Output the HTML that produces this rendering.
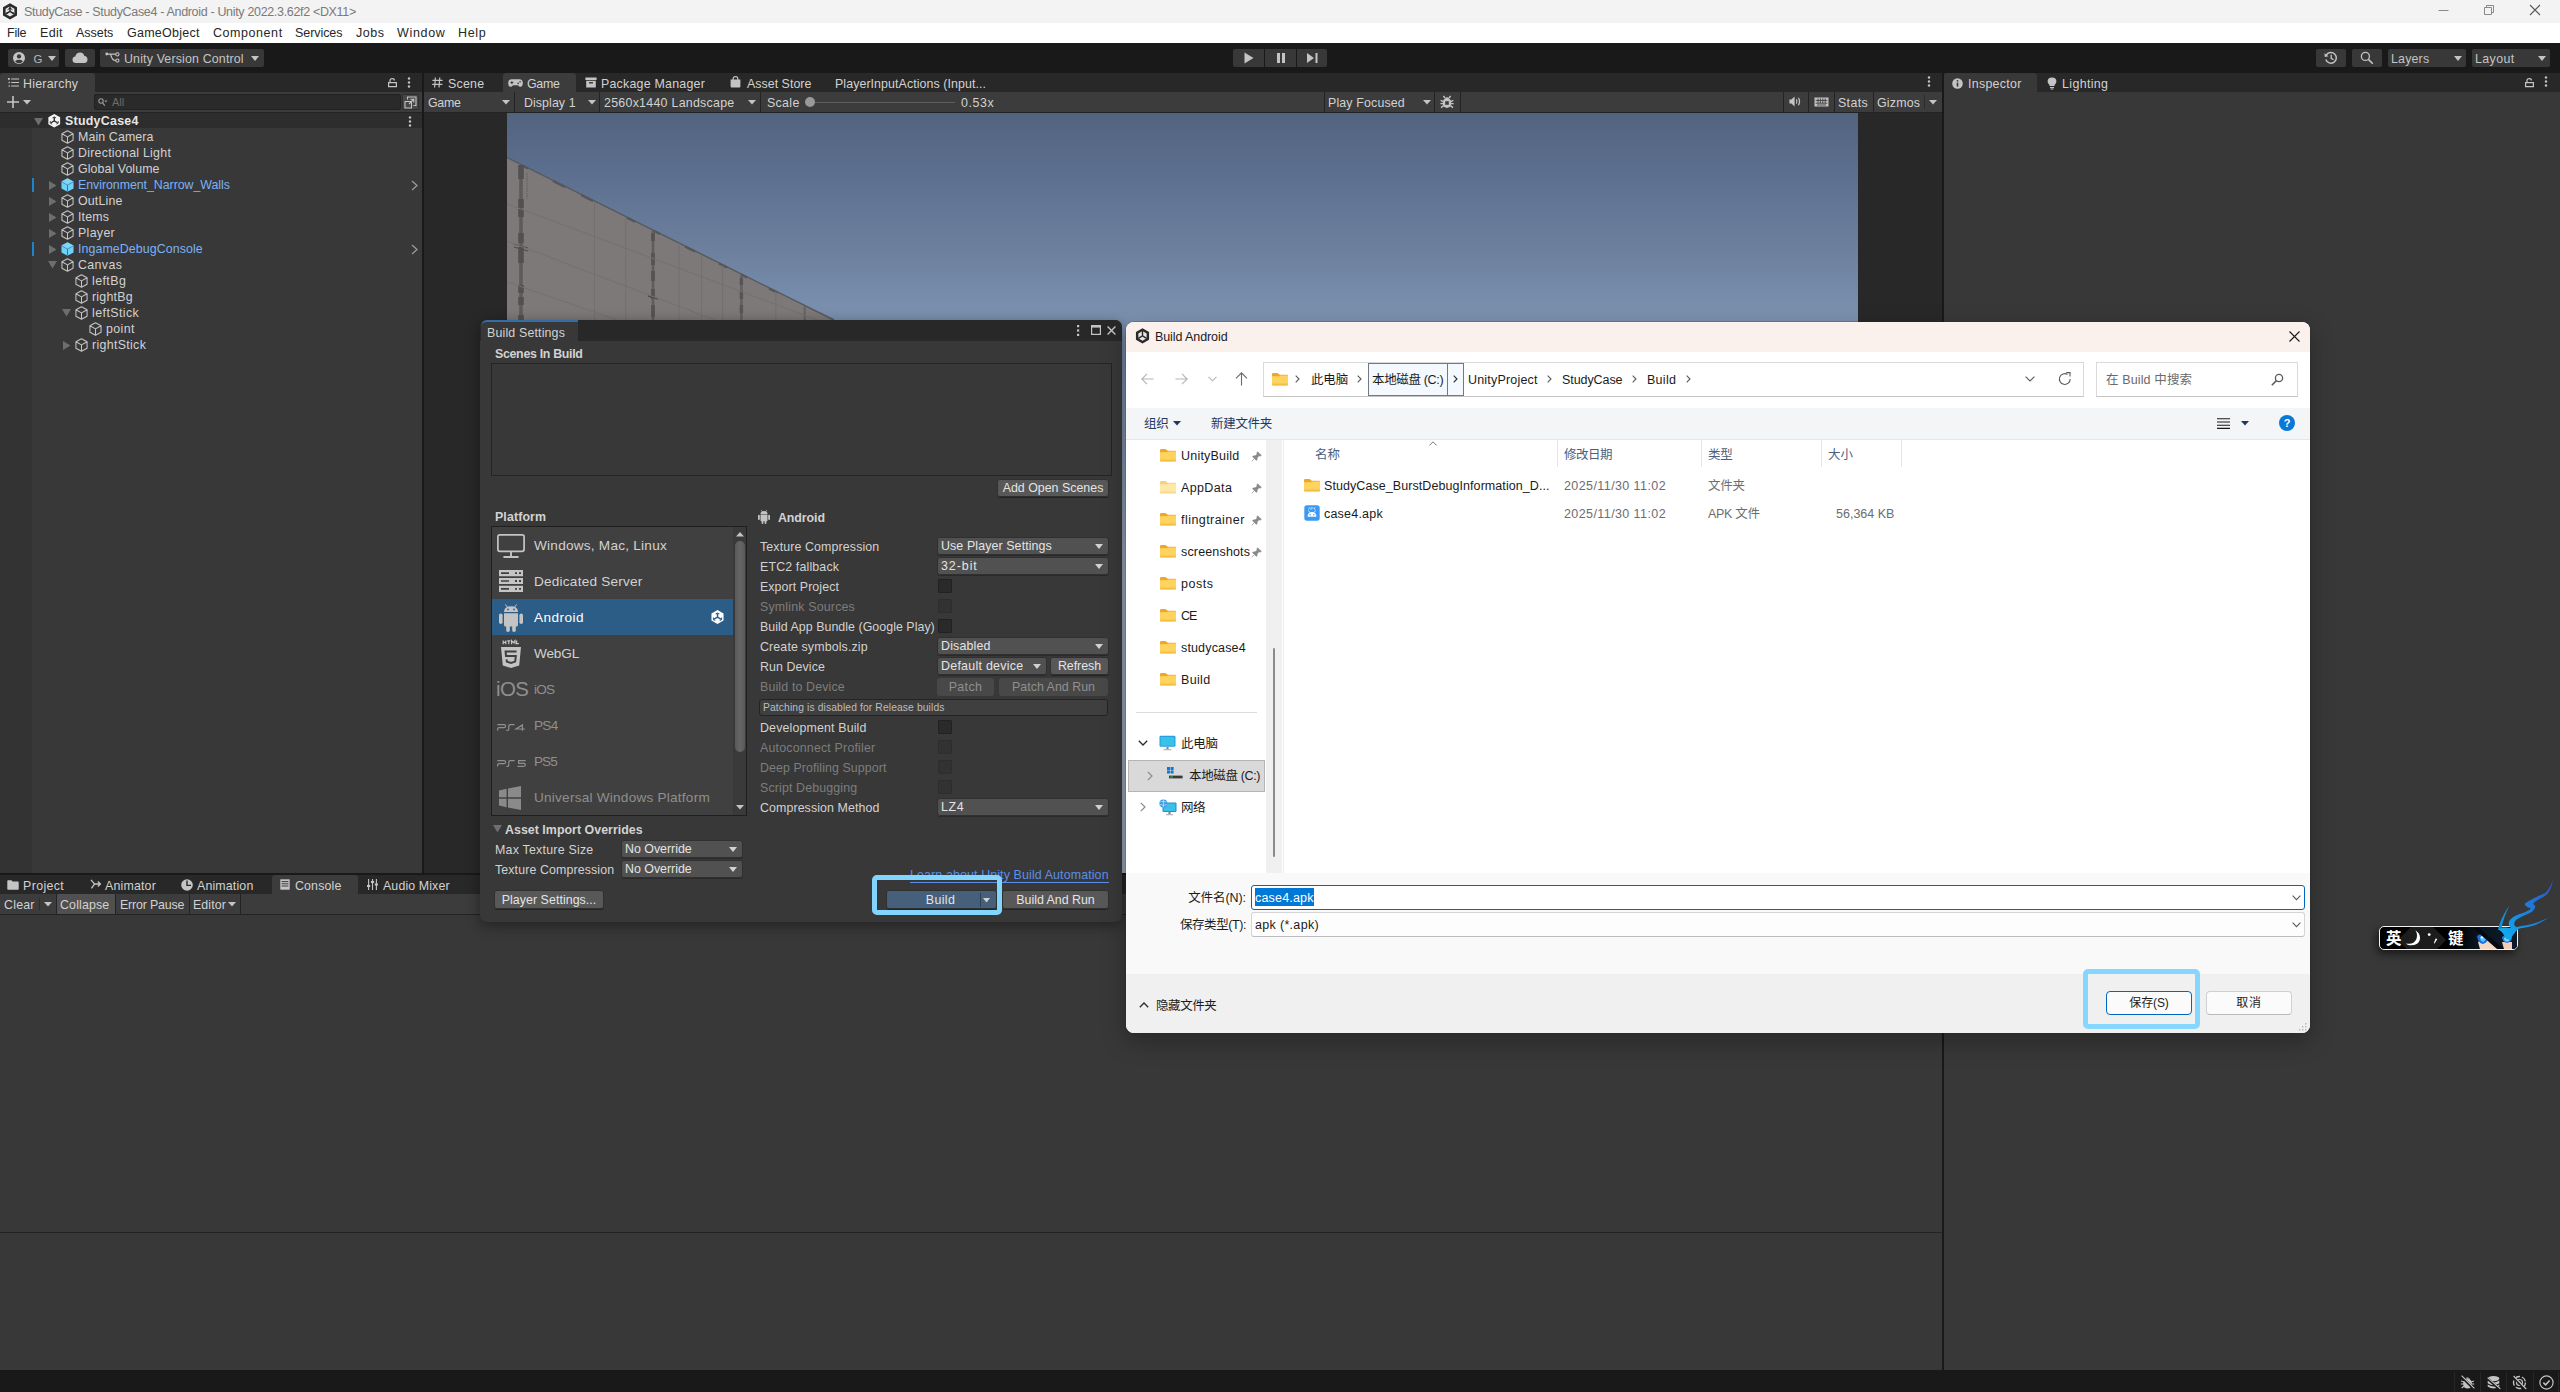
<!DOCTYPE html>
<html lang="zh-CN"><head><meta charset="utf-8"><title>StudyCase - Unity</title>
<style>
*{box-sizing:border-box;margin:0;padding:0}
html,body{width:2560px;height:1392px;overflow:hidden;background:#383838}
body{font-family:"Liberation Sans","Noto Sans CJK SC",sans-serif;font-size:12px;color:#d2d2d2}
#root{position:relative;width:2560px;height:1392px;overflow:hidden}
.a{position:absolute}
.t{position:absolute;white-space:nowrap;height:18px;line-height:18px;font-size:12.4px;color:#d2d2d2}
.b{font-weight:bold}
.dim{color:#7d7d7d}
.w{position:absolute;white-space:nowrap;height:20px;line-height:20px;font-size:12.5px;color:#1b1b1b;font-family:"Liberation Sans","Noto Sans CJK SC",sans-serif}
.g{color:#6d6d6d}
svg{position:absolute;overflow:visible}
.btn{position:absolute;background:#585858;border-radius:3px;box-shadow:0 1px 0 #242424, 0 0 0 1px #303030 inset;text-align:center;white-space:nowrap;font-size:12.4px;color:#e4e4e4;height:18px;line-height:18px}
.dd{position:absolute;background:#515151;border-radius:3px;box-shadow:0 0 0 1px #303030 inset,0 1px 0 #2a2a2a;white-space:nowrap;font-size:12.4px;color:#e4e4e4;height:18px;line-height:18px;padding-left:4px}
.dd:after{content:"";position:absolute;right:6px;top:7px;border:4px solid transparent;border-top:5px solid #d2d2d2;border-bottom:0}
.cb{position:absolute;width:14px;height:14px;background:#2a2a2a;border-radius:2px;box-shadow:0 0 0 1px #212121 inset}
.cb.off{background:#323232;box-shadow:0 0 0 1px #2d2d2d inset}
.sep{position:absolute;width:1px;background:#232323}
.tbb{position:absolute;top:49px;height:18px;background:#383838;border-radius:2px}
.m{color:#262626}

</style></head>
<body>
<svg width="0" height="0" style="position:absolute;left:-10px;top:-10px">
<defs>
<symbol id="cube" viewBox="0 0 14 15" overflow="visible">
  <path d="M7 .8 L13 4 L13 11 L7 14.2 L1 11 L1 4 Z M1 4 L7 7.4 L13 4 M7 7.4 L7 14.2" fill="none" stroke="#c4c4c4" stroke-width="1.15" stroke-linejoin="round"></path>
</symbol>
<symbol id="pcube" viewBox="0 0 14 15" overflow="visible">
  <path d="M7 .3 L13.5 3.8 L13.5 11.2 L7 14.7 L.5 11.2 L.5 3.8 Z" fill="#6fd2f8"></path>
  <path d="M.5 3.8 L7 7.4 L13.5 3.8 M7 7.4 L7 14.7" fill="none" stroke="#2f6f8f" stroke-width="1"></path>
  <path d="M7 .3 L13.5 3.8 L7 7.4 L.5 3.8 Z" fill="#86dbfb" opacity=".6"></path>
</symbol>
<symbol id="ulogo" viewBox="0 0 14 15" overflow="visible">
  <path d="M7 0 L13.6 3.7 L13.6 11.3 L7 15 L.4 11.3 L.4 3.7 Z" fill="currentColor"></path>
  <path d="M7 3.4 L7 7.6 L3.4 9.7 M7 7.6 L10.6 9.7" stroke="#2d2d2d" stroke-width="1.5" fill="none"></path>
  <path d="M5 4.4 L7 3.2 L9 4.4 M2.6 8 L2.6 10.2 L4.6 11.3 M11.4 8 L11.4 10.2 L9.4 11.3" stroke="#2d2d2d" stroke-width="1" fill="none"></path>
</symbol>
<symbol id="fold" viewBox="0 0 18 16" overflow="visible">
  <path d="M1 3.2 Q1 2 2.2 2 L6.2 2 Q6.9 2 7.4 2.5 L8.6 3.7 L15.8 3.7 Q17 3.7 17 4.9 L17 6 L1 6 Z" fill="#e9a92e"></path>
  <path d="M1 5.2 L8 5.2 Q8.6 5.2 9.1 4.8 L9.6 4.4 L15.8 4.4 Q17 4.4 17 5.6 L17 13.3 Q17 14.5 15.8 14.5 L2.2 14.5 Q1 14.5 1 13.3 Z" fill="#ffd45e"></path>
  <path d="M1 12.5 L17 12.5 L17 13.3 Q17 14.5 15.8 14.5 L2.2 14.5 Q1 14.5 1 13.3 Z" fill="#f5bf42"></path>
</symbol>
<symbol id="pin" viewBox="0 0 12 12" overflow="visible">
  <path d="M7.2 .8 L11.2 4.8 L10.2 5.4 L8.6 5.2 L6.6 7.6 L6.6 9.6 L5.8 10.2 L1.8 6.2 L2.4 5.4 L4.4 5.4 L6.8 3.4 L6.6 1.8 Z M3.6 8.4 L.8 11.2" fill="#8a8a8a" stroke="#8a8a8a" stroke-width=".8"></path>
</symbol>
</defs>
</svg>

<div id="root">

<!-- 00_base.html -->
<!-- window title bar -->
<div class="a" style="left:0;top:0;width:2560px;height:23px;background:#f3f3f3"></div>
<div class="w" style="left: 24px; top: 2px; color: rgb(122, 122, 122); letter-spacing: -0.33px;">StudyCase - StudyCase4 - Android - Unity 2022.3.62f2 &lt;DX11&gt;</div>
<!-- menu bar -->
<div class="a" style="left:0;top:23px;width:2560px;height:20px;background:#ffffff"></div>
<div class="w m" style="left: 7px; top: 23px; letter-spacing: -0.22px;">File</div>
<div class="w m" style="left: 40px; top: 23px; letter-spacing: 0.32px;">Edit</div>
<div class="w m" style="left: 76px; top: 23px; letter-spacing: -0.04px;">Assets</div>
<div class="w m" style="left: 127px; top: 23px; letter-spacing: 0.26px;">GameObject</div>
<div class="w m" style="left: 213px; top: 23px; letter-spacing: 0.56px;">Component</div>
<div class="w m" style="left: 295px; top: 23px; letter-spacing: -0.06px;">Services</div>
<div class="w m" style="left: 356px; top: 23px; letter-spacing: 0.5px;">Jobs</div>
<div class="w m" style="left: 397px; top: 23px; letter-spacing: 0.67px;">Window</div>
<div class="w m" style="left: 458px; top: 23px; letter-spacing: 0.63px;">Help</div>
<!-- main toolbar -->
<div class="a" style="left:0;top:43px;width:2560px;height:30px;background:#191919"></div>
<!-- dock background / splitters -->
<div class="a" style="left:0;top:73px;width:2560px;height:1297px;background:#191919"></div>
<!-- hierarchy panel -->
<div class="a" id="hier" style="left:0;top:73px;width:422px;height:800px;background:#383838"></div>
<!-- game panel -->
<div class="a" id="game" style="left:424px;top:73px;width:1518px;height:800px;background:#282828"></div>
<!-- inspector panel -->
<div class="a" id="insp" style="left:1944px;top:73px;width:616px;height:1297px;background:#383838"></div>
<!-- console panel -->
<div class="a" id="cons" style="left:0;top:875px;width:1942px;height:495px;background:#383838"></div>
<!-- status bar -->
<div class="a" style="left:0;top:1370px;width:2560px;height:22px;background:#191919"></div>

<!-- 10_toolbar.html -->
<!-- unity app icon -->
<svg style="left:2px;top:3px" width="16" height="17" viewBox="0 0 16 17"><path d="M8 .3 L15 4.3 L15 12.5 L8 16.6 L1 12.5 L1 4.3 Z" fill="#2b2b2b"></path><path d="M8 3.2 L12.4 5.8 L12.4 11 L8 13.6 L3.6 11 L3.6 5.8 Z" fill="#e8e8e8"></path><path d="M8 3.2 L8 8.4 L3.6 11 M8 8.4 L12.4 11" stroke="#2b2b2b" stroke-width="1.5" fill="none"></path><path d="M5.6 6.6 L8 5.2 L10.4 6.6 M5.2 9 L5.2 10.6 M10.8 9 L10.8 10.6" stroke="#2b2b2b" stroke-width="1" fill="none"></path></svg>
<!-- window controls -->
<svg style="left:2438px;top:4px" width="110" height="14" viewBox="0 0 110 14"><path d="M.5 6.5 H10.5" stroke="#8a8a8a" stroke-width="1" fill="none"></path><path d="M46.5 3.5 H53.5 V10.5 H46.5 Z M48.5 3.5 V1.5 H55.5 V8.5 H53.5" stroke="#8a8a8a" stroke-width="1" fill="none" stroke-linejoin="round"></path><path d="M92 1 L102 11 M102 1 L92 11" stroke="#5a5a5a" stroke-width="1.1" fill="none"></path></svg>

<!-- account button -->
<div class="tbb" style="left:8px;width:51px"></div>
<svg style="left:13px;top:52px" width="12" height="12" viewBox="0 0 12 12"><circle cx="6" cy="6" r="6" fill="#c4c4c4"></circle><circle cx="6" cy="4.4" r="2.1" fill="#383838"></circle><path d="M2 9.3 Q6 6.4 10 9.3 Q8.4 11.2 6 11.2 Q3.6 11.2 2 9.3Z" fill="#383838"></path></svg>
<div class="t" style="left:33.5px;top:50px;color:#b8b8b8;font-size:11.4px">G</div>
<svg style="left:48px;top:56px" width="8" height="5"><path d="M0 0 H8 L4 5 Z" fill="#c4c4c4"></path></svg>
<!-- cloud -->
<div class="tbb" style="left:65px;width:30px"></div>
<svg style="left:72px;top:52px" width="16" height="11" viewBox="0 0 16 11"><path d="M4 11 Q.5 11 .5 7.8 Q.5 5 3.3 4.6 Q4.2 .5 8.2 .5 Q11.6 .5 12.4 4 Q15.5 4.3 15.5 7.6 Q15.5 11 12.4 11 Z" fill="#c4c4c4"></path></svg>
<!-- UVC -->
<div class="tbb" style="left:100px;width:164px"></div>
<svg style="left:105px;top:52px" width="15" height="11" viewBox="0 0 15 11"><circle cx="1.8" cy="2" r="1.4" fill="#c4c4c4"></circle><circle cx="12.4" cy="2.4" r="1.6" fill="none" stroke="#c4c4c4" stroke-width="1.1"></circle><circle cx="12.4" cy="8.6" r="1.6" fill="none" stroke="#c4c4c4" stroke-width="1.1"></circle><path d="M3 2.2 H10.8 M5.6 2.4 Q7 8.6 10.8 8.6" stroke="#c4c4c4" stroke-width="1.2" fill="none"></path></svg>
<div class="t" style="left: 124px; top: 50px; color: rgb(196, 196, 196); letter-spacing: 0.16px;">Unity Version Control</div>
<svg style="left:251px;top:56px" width="8" height="5"><path d="M0 0 H8 L4 5 Z" fill="#c4c4c4"></path></svg>

<!-- play controls -->
<div class="tbb" style="left:1233px;width:31px;border-radius:2px 0 0 2px"></div>
<div class="tbb" style="left:1265px;width:31px;border-radius:0"></div>
<div class="tbb" style="left:1297px;width:30px;border-radius:0 2px 2px 0"></div>
<svg style="left:1244px;top:52px" width="10" height="12"><path d="M.5 .5 L9.5 6 L.5 11.5 Z" fill="#c4c4c4"></path></svg>
<svg style="left:1276px;top:53px" width="10" height="10"><path d="M1 0 H4 V10 H1 Z M6 0 H9 V10 H6 Z" fill="#c4c4c4"></path></svg>
<svg style="left:1307px;top:53px" width="11" height="10"><path d="M0 0 L7 5 L0 10 Z M8.5 0 H10.5 V10 H8.5 Z" fill="#c4c4c4"></path></svg>

<!-- right toolbar -->
<div class="tbb" style="left:2316px;width:30px"></div>
<svg style="left:2324px;top:51px" width="14" height="14" viewBox="0 0 14 14"><path d="M2.2 4.2 A5.4 5.4 0 1 1 1.8 8.6" fill="none" stroke="#c4c4c4" stroke-width="1.4"></path><path d="M.4 2.2 L.8 6 L4.6 5.2 Z" fill="#c4c4c4"></path><path d="M7.2 3.8 V7.4 L9.6 8.8" stroke="#c4c4c4" stroke-width="1.3" fill="none"></path></svg>
<div class="tbb" style="left:2352px;width:30px"></div>
<svg style="left:2360px;top:51px" width="14" height="14" viewBox="0 0 14 14"><circle cx="5.4" cy="5.4" r="4" fill="none" stroke="#c4c4c4" stroke-width="1.3"></circle><path d="M8.4 8.4 L12.8 12.8" stroke="#c4c4c4" stroke-width="1.6"></path></svg>
<div class="tbb" style="left:2388px;width:78px"></div>
<div class="t" style="left: 2391px; top: 50px; color: rgb(196, 196, 196); letter-spacing: 0.18px;">Layers</div>
<svg style="left:2454px;top:56px" width="8" height="5"><path d="M0 0 H8 L4 5 Z" fill="#c4c4c4"></path></svg>
<div class="tbb" style="left:2472px;width:78px"></div>
<div class="t" style="left: 2475px; top: 50px; color: rgb(196, 196, 196); letter-spacing: 0.4px;">Layout</div>
<svg style="left:2538px;top:56px" width="8" height="5"><path d="M0 0 H8 L4 5 Z" fill="#c4c4c4"></path></svg>

<!-- 20_hier.html -->
<div class="a" style="left:0;top:73px;width:422px;height:19px;background:#282828"></div>
<div class="a" style="left:0;top:73px;width:95px;height:19px;background:#3c3c3c;border-radius:3px 3px 0 0"></div>
<svg style="left:8px;top:78px" width="11" height="9" viewBox="0 0 11 9"><path d="M3.2 1 H11 M3.2 4.5 H11 M3.2 8 H11" stroke="#c4c4c4" stroke-width="1.1"></path><path d="M0 0 H1.8 V1.8 H0Z M.6 3.8 H1.8 V5.2 H.6Z M.6 7.3 H1.8 V8.7 H.6Z" fill="#c4c4c4"></path></svg>
<div class="t" style="left: 23px; top: 75px; letter-spacing: 0.25px;">Hierarchy</div>
<svg style="left:388px;top:78px" width="9" height="10" viewBox="0 0 9 10"><path d="M.6 4.6 H8.4 V8.6 H.6Z" fill="none" stroke="#c4c4c4" stroke-width="1.2"></path><path d="M2 4.6 V2.6 Q2 .7 4.2 .7 Q6.4 .7 6.4 2.4" fill="none" stroke="#c4c4c4" stroke-width="1.2"></path></svg>
<svg style="left:407px;top:77px" width="4" height="12"><circle cx="2" cy="1.5" r="1.2" fill="#c4c4c4"></circle><circle cx="2" cy="5.5" r="1.2" fill="#c4c4c4"></circle><circle cx="2" cy="9.5" r="1.2" fill="#c4c4c4"></circle></svg>
<div class="a" style="left:0;top:92px;width:422px;height:20px;background:#3c3c3c"></div>
<div class="a" style="left:0;top:112px;width:422px;height:1px;background:#232323"></div>
<svg style="left:7px;top:96px" width="12" height="12"><path d="M6 0 V12 M0 6 H12" stroke="#c4c4c4" stroke-width="1.6"></path></svg>
<svg style="left:23px;top:100px" width="8" height="5"><path d="M0 0 H8 L4 4.5 Z" fill="#c4c4c4"></path></svg>
<div class="a" style="left:94px;top:94px;width:307px;height:16px;background:#2a2a2a;border-radius:3px;box-shadow:0 0 0 1px #212121 inset"></div>
<svg style="left:98px;top:98px" width="10" height="9" viewBox="0 0 10 9"><circle cx="3" cy="3" r="2.2" fill="none" stroke="#9a9a9a" stroke-width="1.1"></circle><path d="M4.6 4.8 L6.8 7.6" stroke="#9a9a9a" stroke-width="1.2"></path><path d="M6.4 2.6 H9.4 L7.9 4.4Z" fill="#9a9a9a"></path></svg>
<div class="t" style="left:112px;top:93px;color:#6b6b6b;font-size:11px">All</div>
<div class="a" style="left:402px;top:94px;width:17px;height:16px;background:#474747;border-radius:2px;box-shadow:0 0 0 1px #2e2e2e inset"></div>
<svg style="left:404px;top:96px" width="13" height="13" viewBox="0 0 13 13"><path d="M3.5 3.5 V1 H12 V9.5 H9.5" fill="none" stroke="#c4c4c4" stroke-width="1.1"></path><path d="M1 5.5 H7.5 V12 H1Z" fill="none" stroke="#c4c4c4" stroke-width="1.1"></path><path d="M5 8 L9.6 3.4 M6.4 3.2 H9.8 V6.6" fill="none" stroke="#c4c4c4" stroke-width="1.1"></path></svg>
<div class="a" style="left:0;top:113px;width:422px;height:15px;background:#2d2d2d"></div>
<div class="a" style="left:0;top:128px;width:32px;height:745px;background:#333333"></div>
<svg style="left:34px;top:118px" width="9" height="8"><path d="M0 0 H9 L4.5 7.5 Z" fill="#6e6e6e"></path></svg>
<svg style="left:48px;top:114px;color:#f4f4f4" width="12.5" height="13.5"><use href="#ulogo"></use></svg>
<div class="t b" style="left: 65px; top: 112px; color: rgb(230, 230, 230); letter-spacing: 0.27px;">StudyCase4</div>
<svg style="left:408px;top:116px" width="4" height="12"><circle cx="2" cy="1.5" r="1.2" fill="#c4c4c4"></circle><circle cx="2" cy="5.5" r="1.2" fill="#c4c4c4"></circle><circle cx="2" cy="9.5" r="1.2" fill="#c4c4c4"></circle></svg>
<svg style="left:61px;top:130px" width="13" height="14"><use href="#cube"></use></svg>
<div class="t" style="left: 78px; top: 128px; letter-spacing: 0.11px;">Main Camera</div>
<svg style="left:61px;top:146px" width="13" height="14"><use href="#cube"></use></svg>
<div class="t" style="left: 78px; top: 144px; letter-spacing: 0.25px;">Directional Light</div>
<svg style="left:61px;top:162px" width="13" height="14"><use href="#cube"></use></svg>
<div class="t" style="left: 78px; top: 160px; letter-spacing: 0.07px;">Global Volume</div>
<div class="a" style="left:32px;top:178px;width:2px;height:14px;background:#1a86c9"></div>
<svg style="left:411px;top:180px" width="7" height="11"><path d="M1 1 L6 5.5 L1 10" fill="none" stroke="#9a9a9a" stroke-width="1.3"></path></svg>
<svg style="left:49px;top:181px" width="8" height="9"><path d="M0 0 L7.5 4.5 L0 9 Z" fill="#6e6e6e"></path></svg>
<svg style="left:61px;top:178px" width="13" height="14"><use href="#pcube"></use></svg>
<div class="t" style="left:78px;top:176px;letter-spacing:-0.05px;color:#7bb2f5">Environment_Narrow_Walls</div>
<svg style="left:49px;top:197px" width="8" height="9"><path d="M0 0 L7.5 4.5 L0 9 Z" fill="#6e6e6e"></path></svg>
<svg style="left:61px;top:194px" width="13" height="14"><use href="#cube"></use></svg>
<div class="t" style="left: 78px; top: 192px; letter-spacing: 0.17px;">OutLine</div>
<svg style="left:49px;top:213px" width="8" height="9"><path d="M0 0 L7.5 4.5 L0 9 Z" fill="#6e6e6e"></path></svg>
<svg style="left:61px;top:210px" width="13" height="14"><use href="#cube"></use></svg>
<div class="t" style="left: 78px; top: 208px; letter-spacing: 0.17px;">Items</div>
<svg style="left:49px;top:229px" width="8" height="9"><path d="M0 0 L7.5 4.5 L0 9 Z" fill="#6e6e6e"></path></svg>
<svg style="left:61px;top:226px" width="13" height="14"><use href="#cube"></use></svg>
<div class="t" style="left: 78px; top: 224px; letter-spacing: 0.32px;">Player</div>
<div class="a" style="left:32px;top:242px;width:2px;height:14px;background:#1a86c9"></div>
<svg style="left:411px;top:244px" width="7" height="11"><path d="M1 1 L6 5.5 L1 10" fill="none" stroke="#9a9a9a" stroke-width="1.3"></path></svg>
<svg style="left:49px;top:245px" width="8" height="9"><path d="M0 0 L7.5 4.5 L0 9 Z" fill="#6e6e6e"></path></svg>
<svg style="left:61px;top:242px" width="13" height="14"><use href="#pcube"></use></svg>
<div class="t" style="left: 78px; top: 240px; letter-spacing: 0.08px; color: rgb(123, 178, 245);">IngameDebugConsole</div>
<svg style="left:48px;top:261px" width="9" height="8"><path d="M0 0 H9 L4.5 7.5 Z" fill="#6e6e6e"></path></svg>
<svg style="left:61px;top:258px" width="13" height="14"><use href="#cube"></use></svg>
<div class="t" style="left: 78px; top: 256px; letter-spacing: 0.38px;">Canvas</div>
<svg style="left:75px;top:274px" width="13" height="14"><use href="#cube"></use></svg>
<div class="t" style="left: 92px; top: 272px; letter-spacing: 0.42px;">leftBg</div>
<svg style="left:75px;top:290px" width="13" height="14"><use href="#cube"></use></svg>
<div class="t" style="left: 92px; top: 288px; letter-spacing: 0.22px;">rightBg</div>
<svg style="left:62px;top:309px" width="9" height="8"><path d="M0 0 H9 L4.5 7.5 Z" fill="#6e6e6e"></path></svg>
<svg style="left:75px;top:306px" width="13" height="14"><use href="#cube"></use></svg>
<div class="t" style="left: 92px; top: 304px; letter-spacing: 0.43px;">leftStick</div>
<svg style="left:89px;top:322px" width="13" height="14"><use href="#cube"></use></svg>
<div class="t" style="left: 106px; top: 320px; letter-spacing: 0.38px;">point</div>
<svg style="left:63px;top:341px" width="8" height="9"><path d="M0 0 L7.5 4.5 L0 9 Z" fill="#6e6e6e"></path></svg>
<svg style="left:75px;top:338px" width="13" height="14"><use href="#cube"></use></svg>
<div class="t" style="left: 92px; top: 336px; letter-spacing: 0.32px;">rightStick</div>
<!-- 30_game.html -->
<!-- game tabs -->
<div class="a" style="left:503px;top:73px;width:73px;height:19px;background:#3c3c3c;border-radius:3px 3px 0 0"></div>
<svg style="left:432px;top:77px" width="11" height="11" viewBox="0 0 11 11"><path d="M3.4 .5 L2.6 10.5 M7.8 .5 L7 10.5 M.4 3.4 H10.6 M.2 7.4 H10.4" stroke="#c4c4c4" stroke-width="1.2" fill="none"></path></svg>
<div class="t" style="left: 448px; top: 75px; letter-spacing: 0.24px;">Scene</div>
<svg style="left:508px;top:79px" width="15" height="8" viewBox="0 0 15 8"><path d="M3.8 .3 H11.2 Q14.8 .3 14.8 4 Q14.8 7.7 12.4 7.7 Q11 7.7 10 6.2 H5 Q4 7.7 2.6 7.7 Q.2 7.7 .2 4 Q.2 .3 3.8 .3Z" fill="#c4c4c4"></path><path d="M2.4 3.6 H5.4 M3.9 2.1 V5.1" stroke="#3c3c3c" stroke-width="1"></path><circle cx="10.2" cy="4.4" r=".8" fill="#3c3c3c"></circle><circle cx="12.1" cy="2.8" r=".8" fill="#3c3c3c"></circle></svg>
<div class="t" style="left: 527px; top: 75px; letter-spacing: -0.32px;">Game</div>
<svg style="left:585px;top:77px" width="12" height="11" viewBox="0 0 12 11"><path d="M.4 .4 H11.6 V3 H.4Z M1.2 3.8 H10.8 V10.6 H1.2Z" fill="#c4c4c4"></path><path d="M4 5.8 H8" stroke="#282828" stroke-width="1.3"></path></svg>
<div class="t" style="left: 601px; top: 75px; letter-spacing: 0.23px;">Package Manager</div>
<svg style="left:730px;top:76px" width="11" height="12" viewBox="0 0 11 12"><path d="M.6 3.6 H10.4 L10.4 10.6 Q10.4 11.6 9.4 11.6 H1.6 Q.6 11.6 .6 10.6Z" fill="#c4c4c4"></path><path d="M3.2 4.4 V2.6 Q3.2 .6 5.5 .6 Q7.8 .6 7.8 2.6 V4.4" fill="none" stroke="#c4c4c4" stroke-width="1.2"></path></svg>
<div class="t" style="left: 747px; top: 75px; letter-spacing: 0.03px;">Asset Store</div>
<div class="t" style="left: 835px; top: 75px; letter-spacing: 0.08px;">PlayerInputActions (Input...</div>
<svg style="left:1927px;top:76px" width="4" height="12"><circle cx="2" cy="1.5" r="1.2" fill="#c4c4c4"></circle><circle cx="2" cy="5.5" r="1.2" fill="#c4c4c4"></circle><circle cx="2" cy="9.5" r="1.2" fill="#c4c4c4"></circle></svg>
<!-- game toolbar -->
<div class="a" style="left:424px;top:92px;width:1518px;height:21px;background:#3c3c3c;border-bottom:1px solid #232323"></div>
<div class="t" style="left: 428px; top: 94px; letter-spacing: -0.28px;">Game</div>
<svg style="left:502px;top:100px" width="8" height="5"><path d="M0 0 H8 L4 4.5 Z" fill="#c4c4c4"></path></svg>
<div class="sep" style="left:514px;top:92px;height:20px"></div>
<div class="t" style="left: 524px; top: 94px; letter-spacing: 0.07px;">Display 1</div>
<svg style="left:588px;top:100px" width="8" height="5"><path d="M0 0 H8 L4 4.5 Z" fill="#c4c4c4"></path></svg>
<div class="sep" style="left:599px;top:92px;height:20px"></div>
<div class="t" style="left: 604px; top: 94px; letter-spacing: 0.27px;">2560x1440 Landscape</div>
<svg style="left:748px;top:100px" width="8" height="5"><path d="M0 0 H8 L4 4.5 Z" fill="#c4c4c4"></path></svg>
<div class="sep" style="left:760px;top:92px;height:20px"></div>
<div class="t" style="left: 767px; top: 94px; letter-spacing: 0.32px;">Scale</div>
<div class="a" style="left:810px;top:102px;width:145px;height:1px;background:#5e5e5e"></div>
<div class="a" style="left:805px;top:97px;width:10px;height:10px;border-radius:5px;background:#999999"></div>
<div class="t" style="left: 961px; top: 94px; letter-spacing: 0.62px;">0.53x</div>
<div class="sep" style="left:1324px;top:92px;height:20px"></div>
<div class="t" style="left: 1328px; top: 94px; letter-spacing: 0.15px;">Play Focused</div>
<svg style="left:1423px;top:100px" width="8" height="5"><path d="M0 0 H8 L4 4.5 Z" fill="#c4c4c4"></path></svg>
<div class="sep" style="left:1434px;top:92px;height:20px"></div>
<svg style="left:1440px;top:95px" width="14" height="14" viewBox="0 0 14 14"><ellipse cx="7" cy="8" rx="4.3" ry="5" fill="#c4c4c4"></ellipse><path d="M4.6 3.4 Q7 1 9.4 3.4Z" fill="#c4c4c4"></path><path d="M3.4 1 L5 3 M10.6 1 L9 3 M.6 5.4 L3.4 6.6 M13.4 5.4 L10.6 6.6 M.4 8.6 H3.2 M13.6 8.6 H10.8 M1 12.6 L3.6 10.6 M13 12.6 L10.4 10.6" stroke="#c4c4c4" stroke-width="1.4" fill="none"></path><rect x="5.2" y="6.2" width="3.6" height="3.6" fill="#3c3c3c"></rect></svg>
<div class="sep" style="left:1460px;top:92px;height:20px"></div>
<div class="sep" style="left:1783px;top:92px;height:20px"></div>
<svg style="left:1789px;top:96px" width="13" height="11" viewBox="0 0 13 11"><path d="M.4 3.4 H2.4 L5.6 .6 V10.4 L2.4 7.6 H.4Z" fill="#c4c4c4"></path><path d="M7.4 3.4 Q8.6 5.5 7.4 7.6 M9.4 1.8 Q11.6 5.5 9.4 9.2" stroke="#c4c4c4" stroke-width="1.2" fill="none"></path></svg>
<div class="sep" style="left:1808px;top:92px;height:20px"></div>
<svg style="left:1814px;top:97px" width="15" height="10" viewBox="0 0 15 10"><path d="M.5 .5 H14.5 V9.5 H.5Z" fill="#c4c4c4"></path><path d="M1.6 3.4 H13.4 M1.6 6.2 H13.4 M4 1.4 V6.2 M6.4 1.4 V6.2 M8.8 1.4 V6.2 M11.2 1.4 V6.2 M3 8 H12" stroke="#3c3c3c" stroke-width=".9"></path></svg>
<div class="sep" style="left:1834px;top:92px;height:20px"></div>
<div class="t" style="left: 1838px; top: 94px; letter-spacing: 0.36px;">Stats</div>
<div class="sep" style="left:1873px;top:92px;height:20px"></div>
<div class="t" style="left: 1877px; top: 94px; letter-spacing: 0.18px;">Gizmos</div>
<div class="sep" style="left:1924px;top:95px;height:14px;background:#2c2c2c"></div>
<svg style="left:1929px;top:100px" width="8" height="5"><path d="M0 0 H8 L4 4.5 Z" fill="#c4c4c4"></path></svg>
<!-- game image -->
<div class="a" style="left:507px;top:113px;width:1351px;height:760px;background:linear-gradient(180deg,#52637f 0px,#5e7191 70px,#6d819f 140px,#7c92b0 207px,#8ea4bf 340px,#a9bccf 470px)"></div>
<svg style="left:507px;top:113px" width="1351" height="760" viewBox="0 0 1351 760">
  <path d="M0 44.5 L327 207 L600 342 L600 760 L0 760 Z" fill="#7d7978"></path>
  <path d="M0 44.5 L327 207" stroke="#585a62" stroke-width="1.5" fill="none"></path>
  <path d="M15 52.6 L21 55.6 M46 68 L58 74 M74 82 L86 88 M146 117.6 L153 121.1 M120 104.8 L128 108.8 M178 133.6 L188 138.6 M234 161.4 L240 164.4 M212 150.5 L220 154.5 M262 175.4 L270 179.4" stroke="#55555c" stroke-width="2.2" fill="none"></path>
  <path d="M14 52 V207" stroke="#5e5b5b" stroke-width="3.6"></path>
  <path d="M14 52 V66 M14 86 V95 M14 96 V104 M14 120 V130 M14 134 V150 M14 172 V180 M14 184 V192 M14 202 V207" stroke="#535051" stroke-width="5.6"></path>
  <path d="M7 131 L21 135 M7 134 L21 138" stroke="#4f4d4d" stroke-width="1.2"></path>
  <path d="M20 60 V86" stroke="#6a6666" stroke-width="1.4" stroke-dasharray="1.5 1"></path>
  <path d="M146 118 V207" stroke="#5f5c5c" stroke-width="2.6"></path>
  <path d="M146 120 V128 M146 140 V152 M146 158 V168 M146 176 V186 M146 192 V204" stroke="#565354" stroke-width="3.8"></path>
  <path d="M141 183 L151 186" stroke="#4f4d4d" stroke-width="1.6"></path>
  <path d="M234.4 162 V207" stroke="#605d5d" stroke-width="2.4"></path>
  <path d="M234.4 165 V172 M234.4 178 V186 M234.4 192 V200" stroke="#575455" stroke-width="3.4"></path>
  <path d="M297.7 193 V207" stroke="#666363" stroke-width="2"></path>
  <path d="M87.5 89 V207 M118.8 104 V207 M172 130 V207 M194.5 142 V207 M215.6 152 V207 M268.8 178 V207" stroke="#747070" stroke-width="1"></path>
  <path d="M0 90.8 L310 207 M0 128 L208 207 M0 168.8 L110 207" stroke="#747071" stroke-width="1"></path>
</svg>

<!-- 40_insp.html -->
<div class="a" style="left:1944px;top:73px;width:616px;height:19px;background:#282828"></div>
<div class="a" style="left:1944px;top:73px;width:93px;height:19px;background:#383838;border-radius:3px 3px 0 0"></div>
<svg style="left:1952px;top:78px" width="11" height="11" viewBox="0 0 11 11"><circle cx="5.5" cy="5.5" r="5.3" fill="#c4c4c4"></circle><path d="M5.5 4.6 V8.6" stroke="#383838" stroke-width="1.6"></path><circle cx="5.5" cy="2.8" r=".9" fill="#383838"></circle></svg>
<div class="t" style="left: 1968px; top: 75px; letter-spacing: 0.29px;">Inspector</div>
<svg style="left:2047px;top:77px" width="10" height="13" viewBox="0 0 10 13"><path d="M5 .4 Q9.4 .4 9.4 4.4 Q9.4 6.4 7.6 7.8 V9 H2.4 V7.8 Q.6 6.4 .6 4.4 Q.6 .4 5 .4Z M3 10 H7 V11.2 H3Z M3.8 11.8 H6.2 V12.6 H3.8Z" fill="#c4c4c4"></path></svg>
<div class="t" style="left: 2062px; top: 75px; letter-spacing: 0.37px;">Lighting</div>
<svg style="left:2525px;top:78px" width="9" height="10" viewBox="0 0 9 10"><path d="M.6 4.6 H8.4 V8.6 H.6Z" fill="none" stroke="#c4c4c4" stroke-width="1.2"></path><path d="M2 4.6 V2.6 Q2 .7 4.2 .7 Q6.4 .7 6.4 2.4" fill="none" stroke="#c4c4c4" stroke-width="1.2"></path></svg>
<svg style="left:2544px;top:76px" width="4" height="12"><circle cx="2" cy="1.5" r="1.2" fill="#c4c4c4"></circle><circle cx="2" cy="5.5" r="1.2" fill="#c4c4c4"></circle><circle cx="2" cy="9.5" r="1.2" fill="#c4c4c4"></circle></svg>

<!-- 50_cons.html -->
<div class="a" style="left:0;top:875px;width:1942px;height:19px;background:#282828"></div>
<div class="a" style="left:272px;top:875px;width:86px;height:19px;background:#3c3c3c;border-radius:3px 3px 0 0"></div>
<svg style="left:7px;top:880px" width="12" height="10" viewBox="0 0 12 10"><path d="M.3 1 Q.3 .2 1.1 .2 H4.4 L5.6 1.6 H10.9 Q11.7 1.6 11.7 2.4 V9 Q11.7 9.8 10.9 9.8 H1.1 Q.3 9.8 .3 9Z" fill="#c4c4c4"></path></svg>
<div class="t" style="left: 23px; top: 877px; letter-spacing: 0.37px;">Project</div>
<svg style="left:90px;top:879px" width="11" height="10" viewBox="0 0 11 10"><path d="M1 .8 L4.6 5 L1.4 9.4 M4.6 5 H10.4 M7.8 2.6 L10.4 5 L7.8 7.4" stroke="#c4c4c4" stroke-width="1.3" fill="none"></path></svg>
<div class="t" style="left: 105px; top: 877px; letter-spacing: 0.17px;">Animator</div>
<svg style="left:181px;top:879px" width="12" height="12" viewBox="0 0 12 12"><circle cx="6" cy="6" r="5.8" fill="#c4c4c4"></circle><path d="M6 1.6 V6.4 H10" stroke="#282828" stroke-width="1.4" fill="none"></path></svg>
<div class="t" style="left: 197px; top: 877px; letter-spacing: 0.15px;">Animation</div>
<svg style="left:280px;top:879px" width="10" height="11" viewBox="0 0 10 11"><path d="M.3 .3 H9.7 V10.7 H.3Z" fill="#c4c4c4"></path><path d="M1.6 2.6 H8.4 M1.6 4.8 H8.4 M1.6 7 H8.4" stroke="#3c3c3c" stroke-width="1"></path></svg>
<div class="t" style="left: 295px; top: 877px; letter-spacing: 0.14px;">Console</div>
<svg style="left:367px;top:879px" width="11" height="11" viewBox="0 0 11 11"><path d="M1.6 0 V11 M5.5 0 V11 M9.4 0 V11" stroke="#c4c4c4" stroke-width="1.1"></path><path d="M0 6 H3.2 V8 H0Z M3.9 2 H7.1 V4 H3.9Z M7.8 4.6 H11 V6.6 H7.8Z" fill="#c4c4c4"></path></svg>
<div class="t" style="left: 383px; top: 877px; letter-spacing: 0.11px;">Audio Mixer</div>
<!-- console toolbar -->
<div class="a" style="left:0;top:894px;width:1942px;height:21px;background:#3c3c3c;border-bottom:1px solid #232323"></div>
<div class="a" style="left:57px;top:894px;width:58px;height:20px;background:#505050"></div>
<div class="t" style="left: 4px; top: 896px; letter-spacing: 0.22px;">Clear</div>
<div class="sep" style="left:39px;top:898px;height:12px;background:#2c2c2c"></div>
<svg style="left:44px;top:902px" width="8" height="5"><path d="M0 0 H8 L4 4.5 Z" fill="#c4c4c4"></path></svg>
<div class="sep" style="left:56px;top:894px;height:20px"></div>
<div class="t" style="left: 60px; top: 896px; letter-spacing: 0.15px;">Collapse</div>
<div class="sep" style="left:115px;top:894px;height:20px"></div>
<div class="t" style="left: 120px; top: 896px; letter-spacing: -0.18px;">Error Pause</div>
<div class="sep" style="left:189px;top:894px;height:20px"></div>
<div class="t" style="left: 193px; top: 896px; letter-spacing: 0.08px;">Editor</div>
<svg style="left:228px;top:902px" width="8" height="5"><path d="M0 0 H8 L4 4.5 Z" fill="#c4c4c4"></path></svg>
<div class="sep" style="left:240px;top:894px;height:20px"></div>
<div class="a" style="left:0;top:1232px;width:1942px;height:1px;background:#232323"></div>

<!-- 60_status.html -->
<div class="sep" style="left:2454px;top:1372px;height:20px;background:#272727"></div>
<div class="sep" style="left:2480px;top:1372px;height:20px;background:#272727"></div>
<div class="sep" style="left:2506px;top:1372px;height:20px;background:#272727"></div>
<div class="sep" style="left:2533px;top:1372px;height:20px;background:#272727"></div>
<svg style="left:2460px;top:1375px" width="15" height="15" viewBox="0 0 15 15"><ellipse cx="7.5" cy="8.6" rx="4.4" ry="5" fill="#c4c4c4"></ellipse><path d="M5 3.6 Q7.5 1.2 10 3.6Z" fill="#c4c4c4"></path><path d="M1 6 L4 7 M14 6 L11 7 M.8 9 H3.8 M14.2 9 H11.2 M1.6 13 L4.2 11 M13.4 13 L10.8 11" stroke="#c4c4c4" stroke-width="1.1"></path><path d="M1 1 L14 14" stroke="#191919" stroke-width="2.6"></path><path d="M1.6 .6 L14.4 13.4" stroke="#c4c4c4" stroke-width="1.1"></path></svg>
<svg style="left:2486px;top:1375px" width="15" height="15" viewBox="0 0 15 15"><ellipse cx="7.5" cy="3.6" rx="5.8" ry="2.6" fill="#c4c4c4"></ellipse><path d="M1.7 5.4 Q7.5 9.4 13.3 5.4 V8.2 Q7.5 12.2 1.7 8.2Z M1.7 9.6 Q7.5 13.6 13.3 9.6 V11.6 Q7.5 15.6 1.7 11.6Z" fill="#c4c4c4"></path><path d="M1 3 L14 14.4" stroke="#191919" stroke-width="2.6"></path><path d="M1.6 2.6 L14.4 13.8" stroke="#c4c4c4" stroke-width="1.1"></path></svg>
<svg style="left:2512px;top:1375px" width="15" height="15" viewBox="0 0 15 15"><circle cx="7.5" cy="7.5" r="6" fill="none" stroke="#c4c4c4" stroke-width="1.3" stroke-dasharray="5.5 2"></circle><circle cx="7.5" cy="7.5" r="3" fill="none" stroke="#c4c4c4" stroke-width="1.2"></circle><circle cx="7.5" cy="7.5" r="1" fill="#c4c4c4"></circle><path d="M1 1.4 L13.6 14.4" stroke="#191919" stroke-width="2.6"></path><path d="M1.6 1 L14.2 14" stroke="#c4c4c4" stroke-width="1.1"></path></svg>
<svg style="left:2539px;top:1375px" width="15" height="15" viewBox="0 0 15 15"><circle cx="7.5" cy="7.5" r="6.6" fill="none" stroke="#c4c4c4" stroke-width="1.2"></circle><path d="M4.4 7.6 L6.6 9.8 L10.6 5.4" fill="none" stroke="#c4c4c4" stroke-width="1.5"></path></svg>

<div class="sep" style="left:2558px;top:1372px;height:20px;background:#272727"></div>
<!-- 70_build.html -->
<div class="a" style="left:480px;top:320px;width:642px;height:602px;background:#383838;border-radius:7px;box-shadow:0 3px 14px rgba(0,0,0,.42)"></div>
<div class="a" style="left:480px;top:320px;width:642px;height:21px;background:#282828;border-radius:7px 7px 0 0"></div>
<div class="a" style="left:481px;top:320px;width:97px;height:21px;background:#383838;border-radius:6px 0 0 0;border-top:2px solid #346ca6"></div>
<div class="t" style="left: 487px; top: 324px; letter-spacing: 0.16px;">Build Settings</div>
<svg style="left:1077px;top:325px" width="3" height="12"><rect x="0" y="0" width="2.2" height="2.2" fill="#c4c4c4"></rect><rect x="0" y="4.4" width="2.2" height="2.2" fill="#c4c4c4"></rect><rect x="0" y="8.8" width="2.2" height="2.2" fill="#c4c4c4"></rect></svg>
<svg style="left:1091px;top:325px" width="10" height="10"><path d="M.6 .6 H9.4 V9.4 H.6Z" fill="none" stroke="#c4c4c4" stroke-width="1.2"></path><path d="M.6 1.6 H9.4" stroke="#c4c4c4" stroke-width="2"></path></svg>
<svg style="left:1107px;top:326px" width="9" height="9"><path d="M.6 .6 L8.4 8.4 M8.4 .6 L.6 8.4" stroke="#c4c4c4" stroke-width="1.4"></path></svg>
<div class="t b" style="left: 495px; top: 345px; letter-spacing: -0.31px;">Scenes In Build</div>
<div class="a" style="left:491px;top:363px;width:621px;height:113px;background:#383838;border:1px solid #242424"></div>
<div class="btn" style="left: 997px; top: 479px; width: 112px; letter-spacing: 0.01px;">Add Open Scenes</div>
<div class="t b" style="left: 495px; top: 508px; letter-spacing: 0.11px;">Platform</div>
<div class="a" style="left:491px;top:526px;width:256px;height:290px;background:#404040;border:1px solid #1f1f1f"></div>
<div class="a" style="left:733px;top:527px;width:13px;height:288px;background:#3a3a3a;border-left:1px solid #383838"></div>
<div class="a" style="left:735px;top:541px;width:10px;height:211px;border-radius:5px;background:linear-gradient(90deg,#585858,#666 50%,#585858)"></div>
<svg style="left:736px;top:532px" width="8" height="5"><path d="M0 4.5 H8 L4 0 Z" fill="#c4c4c4"></path></svg>
<svg style="left:736px;top:805px" width="8" height="5"><path d="M0 0 H8 L4 4.5 Z" fill="#c4c4c4"></path></svg>
<div class="a" style="left:492px;top:599px;width:241px;height:36px;background:#2c5d87"></div>
<div class="t" style="left: 534px; top: 536px; height: 20px; line-height: 20px; font-size: 13.6px; color: rgb(210, 210, 210); letter-spacing: 0.24px;">Windows, Mac, Linux</div>
<div class="t" style="left: 534px; top: 572px; height: 20px; line-height: 20px; font-size: 13.6px; color: rgb(210, 210, 210); letter-spacing: 0.22px;">Dedicated Server</div>
<div class="t" style="left: 534px; top: 608px; height: 20px; line-height: 20px; font-size: 13.6px; color: rgb(255, 255, 255); letter-spacing: 0.46px;">Android</div>
<div class="t" style="left: 534px; top: 644px; height: 20px; line-height: 20px; font-size: 13.6px; color: rgb(210, 210, 210); letter-spacing: -0.14px;">WebGL</div>
<div class="t" style="left: 534px; top: 680px; height: 20px; line-height: 20px; font-size: 13.6px; color: rgb(143, 143, 143); letter-spacing: -0.78px;">iOS</div>
<div class="t" style="left: 534px; top: 716px; height: 20px; line-height: 20px; font-size: 13.6px; color: rgb(143, 143, 143); letter-spacing: -0.75px;">PS4</div>
<div class="t" style="left: 534px; top: 752px; height: 20px; line-height: 20px; font-size: 13.6px; color: rgb(143, 143, 143); letter-spacing: -1px;">PS5</div>
<div class="t" style="left: 534px; top: 788px; height: 20px; line-height: 20px; font-size: 13.6px; color: rgb(143, 143, 143); letter-spacing: 0.23px;">Universal Windows Platform</div>
<svg style="left:497px;top:534px" width="28" height="24" viewBox="0 0 28 24"><rect x=".9" y=".9" width="26.2" height="16.4" rx="2" fill="none" stroke="#c4c4c4" stroke-width="1.7"></rect><path d="M14 17.5 V22.6 M6.4 23 H21.6" stroke="#c4c4c4" stroke-width="1.9" fill="none"></path></svg>
<svg style="left:499px;top:570px" width="24" height="22" viewBox="0 0 24 22"><path d="M0 0 H24 V6.2 H0Z M0 7.9 H24 V14.1 H0Z M0 15.8 H24 V22 H0Z" fill="#c4c4c4"></path><path d="M2 3.1 H10 M2 11 H10 M2 18.9 H10" stroke="#404040" stroke-width="1.7"></path><path d="M16 2.2 H18 V4 H16Z M20 2.2 H22 V4 H20Z M16 10.1 H18 V11.9 H16Z M20 10.1 H22 V11.9 H20Z M16 18 H18 V19.8 H16Z M20 18 H22 V19.8 H20Z" fill="#404040"></path></svg>
<svg style="left:499px;top:604px" width="24" height="28" viewBox="0 0 24 28"><path d="M5 8 Q5 2.2 12 2.2 Q19 2.2 19 8Z" fill="#c4c4c4"></path><path d="M6.4 .4 L8.4 3.2 M17.6 .4 L15.6 3.2" stroke="#c4c4c4" stroke-width="1"></path><path d="M5 9.2 H19 V21 Q19 22.6 17.4 22.6 H6.6 Q5 22.6 5 21Z" fill="#c4c4c4"></path><rect x="0" y="9.4" width="3.6" height="10.6" rx="1.8" fill="#c4c4c4"></rect><rect x="20.4" y="9.4" width="3.6" height="10.6" rx="1.8" fill="#c4c4c4"></rect><rect x="7.2" y="19" width="3.6" height="9" rx="1.8" fill="#c4c4c4"></rect><rect x="13.2" y="19" width="3.6" height="9" rx="1.8" fill="#c4c4c4"></rect><circle cx="9" cy="5.4" r=".9" fill="#2c5d87"></circle><circle cx="15" cy="5.4" r=".9" fill="#2c5d87"></circle></svg>
<svg style="left:711px;top:610px" width="13" height="14" viewBox="0 0 14 15"><path d="M7 0 L13.5 3.7 L13.5 11.3 L7 15 L.5 11.3 L.5 3.7 Z" fill="#fff"></path><path d="M7 3.4 L7 7.6 L3.4 9.7 M7 7.6 L10.6 9.7" stroke="#2c5d87" stroke-width="1.6" fill="none"></path><path d="M5 4.4 L7 3.2 L9 4.4 M2.6 8 L2.6 10.2 L4.6 11.3 M11.4 8 L11.4 10.2 L9.4 11.3" stroke="#2c5d87" stroke-width="1.1" fill="none"></path></svg>
<svg style="left:501px;top:640px" width="20" height="28" viewBox="0 0 20 28"><path d="M0 7 H20 L18.2 25.4 L10 28 L1.8 25.4Z" fill="#c4c4c4"></path><path d="M15.6 11.4 H4.6 L5 16 H14.8 L14.2 21.6 L10 23 L5.8 21.6 L5.6 19.4" fill="none" stroke="#404040" stroke-width="2"></path><path d="M2.2 .4 V4.2 M4.8 .4 V4.2 M2.2 2.3 H4.8 M6.2 .9 H9.4 M7.8 .9 V4.2 M10.6 4.2 V.6 L12.3 2.6 L14 .6 V4.2 M15.6 .4 V3.7 H17.8" stroke="#c4c4c4" stroke-width="1.2" fill="none"></path></svg>
<div class="a" style="left:496px;top:676px;width:30px;height:26px;line-height:26px;font-size:20.5px;color:#8f8f8f;letter-spacing:-.6px;white-space:nowrap">iOS</div>
<svg style="left:497px;top:724px" width="28" height="7" viewBox="0 0 28 7"><path d="M.4 .7 H7 Q8.6 .7 8.6 2.2 Q8.6 3.7 7 3.7 H2.2 Q.6 3.7 .6 5 V6.6 M17.6 .7 H13.4 Q11.8 .7 11.8 2.2 V5 Q11.8 6.4 10.4 6.4 H9.4 M25.4 6.8 V.9 L19 5 H27.8" fill="none" stroke="#8f8f8f" stroke-width="1.2"></path></svg>
<svg style="left:497px;top:760px" width="29" height="7" viewBox="0 0 29 7"><path d="M.4 .7 H7 Q8.6 .7 8.6 2.2 Q8.6 3.7 7 3.7 H2.2 Q.6 3.7 .6 5 V6.6 M17.6 .7 H13.4 Q11.8 .7 11.8 2.2 V5 Q11.8 6.4 10.4 6.4 H9.4 M28.6 .7 H21.6 V3.3 H26.8 Q28.4 3.3 28.4 4.8 Q28.4 6.3 26.8 6.3 H20.4" fill="none" stroke="#8f8f8f" stroke-width="1.2"></path></svg>
<svg style="left:499px;top:786px" width="22" height="24" viewBox="0 0 22 24"><path d="M0 4.4 L7.6 2.8 V11.2 H0Z M9 2.5 L22 0 V11.2 H9Z M0 12.8 H7.6 V21.2 L0 19.6Z M9 12.8 H22 V24 L9 21.5Z" fill="#8a8a8a"></path></svg>
<svg style="left:758px;top:510px" width="12" height="14" viewBox="0 0 24 28"><path d="M5 8 Q5 2.2 12 2.2 Q19 2.2 19 8Z" fill="#c4c4c4"></path><path d="M6.4 .4 L8.4 3.2 M17.6 .4 L15.6 3.2" stroke="#c4c4c4" stroke-width="1.6"></path><path d="M5 9.2 H19 V21 Q19 22.6 17.4 22.6 H6.6 Q5 22.6 5 21Z" fill="#c4c4c4"></path><rect x="0" y="9.4" width="3.6" height="10.6" rx="1.8" fill="#c4c4c4"></rect><rect x="20.4" y="9.4" width="3.6" height="10.6" rx="1.8" fill="#c4c4c4"></rect><rect x="7.2" y="19" width="3.6" height="9" rx="1.8" fill="#c4c4c4"></rect><rect x="13.2" y="19" width="3.6" height="9" rx="1.8" fill="#c4c4c4"></rect></svg>
<div class="t b" style="left: 778px; top: 509px; letter-spacing: -0.08px;">Android</div>
<div class="t" style="left: 760px; top: 538px; letter-spacing: 0.12px;">Texture Compression</div>
<div class="dd" style="left: 937px; top: 537px; width: 172px; letter-spacing: 0.11px;">Use Player Settings</div>
<div class="t" style="left: 760px; top: 558px; letter-spacing: 0.15px;">ETC2 fallback</div>
<div class="dd" style="left: 937px; top: 557px; width: 172px; letter-spacing: 0.96px;">32-bit</div>
<div class="t" style="left: 760px; top: 578px; letter-spacing: 0.08px;">Export Project</div>
<div class="cb" style="left:938px;top:579px"></div>
<div class="t dim" style="left: 760px; top: 598px; letter-spacing: 0.18px;">Symlink Sources</div>
<div class="cb off" style="left:938px;top:599px"></div>
<div class="t" style="left: 760px; top: 618px; letter-spacing: 0.04px;">Build App Bundle (Google Play)</div>
<div class="cb" style="left:938px;top:619px"></div>
<div class="t" style="left: 760px; top: 638px; letter-spacing: 0.13px;">Create symbols.zip</div>
<div class="dd" style="left: 937px; top: 637px; width: 172px; letter-spacing: 0.18px;">Disabled</div>
<div class="t" style="left: 760px; top: 658px; letter-spacing: 0.09px;">Run Device</div>
<div class="dd" style="left: 937px; top: 657px; width: 110px; letter-spacing: 0.28px;">Default device</div>
<div class="btn" style="left: 1050px; top: 657px; width: 59px; letter-spacing: -0.02px;">Refresh</div>
<div class="t dim" style="left: 760px; top: 678px; letter-spacing: 0.15px;">Build to Device</div>
<div class="btn" style="left: 937px; top: 678px; width: 57px; background: rgb(72, 72, 72); color: rgb(143, 143, 143); box-shadow: none; letter-spacing: 0.38px;">Patch</div>
<div class="btn" style="left: 999px; top: 678px; width: 109px; background: rgb(72, 72, 72); color: rgb(143, 143, 143); box-shadow: none; letter-spacing: 0.03px;">Patch And Run</div>
<div class="t" style="left: 760px; top: 719px; letter-spacing: 0.15px;">Development Build</div>
<div class="cb" style="left:938px;top:720px"></div>
<div class="t dim" style="left: 760px; top: 739px; letter-spacing: 0.19px;">Autoconnect Profiler</div>
<div class="cb off" style="left:938px;top:740px"></div>
<div class="t dim" style="left: 760px; top: 759px; letter-spacing: 0.08px;">Deep Profiling Support</div>
<div class="cb off" style="left:938px;top:760px"></div>
<div class="t dim" style="left: 760px; top: 779px; letter-spacing: 0.14px;">Script Debugging</div>
<div class="cb off" style="left:938px;top:780px"></div>
<div class="t" style="left: 760px; top: 799px; letter-spacing: 0.09px;">Compression Method</div>
<div class="dd" style="left: 937px; top: 798px; width: 172px; letter-spacing: 0.67px;">LZ4</div>
<div class="a" style="left:759px;top:699px;width:349px;height:17px;background:#3f3f3f;border:1px solid #242424;border-radius:3px"></div>
<div class="t" style="left: 763px; top: 699px; font-size: 10.3px; color: rgb(189, 189, 189); letter-spacing: 0.12px;">Patching is disabled for Release builds</div>
<svg style="left:493px;top:825px" width="9" height="8"><path d="M0 0 H9 L4.5 7.5 Z" fill="#6e6e6e"></path></svg>
<div class="t b" style="left: 505px; top: 821px; letter-spacing: 0.03px;">Asset Import Overrides</div>
<div class="t" style="left: 495px; top: 841px; letter-spacing: 0.23px;">Max Texture Size</div>
<div class="dd" style="left: 621px; top: 840px; width: 122px; letter-spacing: -0.01px;">No Override</div>
<div class="t" style="left: 495px; top: 861px; letter-spacing: 0.11px;">Texture Compression</div>
<div class="dd" style="left: 621px; top: 860px; width: 122px; letter-spacing: -0.01px;">No Override</div>
<div class="t" style="left: 910px; top: 866px; color: rgb(91, 143, 232); border-bottom: 1px solid rgb(91, 143, 232); height: 17px; letter-spacing: 0.13px;">Learn about Unity Build Automation</div>
<div class="btn" style="left: 494px; top: 890px; width: 110px; height: 19px; line-height: 20px; letter-spacing: 0.06px;">Player Settings...</div>
<div class="btn" style="left: 886px; top: 890px; width: 111px; height: 19px; line-height: 20px; background: rgb(70, 96, 124); padding-right: 2px; letter-spacing: 0.39px;">Build</div>
<div class="sep" style="left:980px;top:893px;height:14px;background:#2f4156"></div>
<svg style="left:983px;top:898px" width="7" height="5"><path d="M0 0 H7 L3.5 4.5 Z" fill="#d2d2d2"></path></svg>
<div class="btn" style="left: 1002px; top: 890px; width: 107px; height: 19px; line-height: 20px; letter-spacing: -0.02px;">Build And Run</div>
<div class="a" style="left:872px;top:875px;width:130px;height:40px;border:5px solid #82d6fe;border-radius:5px"></div>
<!-- 80_file.html -->
<div class="a" style="left:1126px;top:322px;width:1184px;height:711px;background:#ffffff;border-radius:8px;box-shadow:0 0 0 1px rgba(40,40,40,.22),0 8px 24px rgba(0,0,0,.3);overflow:hidden">
<div class="a" style="left:0;top:0;width:1184px;height:30px;background:#faf0ec"></div>
<div class="a" style="left:0;top:86px;width:1184px;height:32px;background:#f3f5f7;border-bottom:1px solid #e6e6e6"></div>
<div class="a" style="left:140px;top:118px;width:16px;height:433px;background:#f0f0f0"></div>
<div class="a" style="left:0;top:551px;width:1184px;height:101px;background:#f9f9f9"></div>
<div class="a" style="left:0;top:652px;width:1184px;height:59px;background:#f0f0f0"></div>
</div>
<svg style="left:1135px;top:328px" width="15" height="16" viewBox="0 0 16 17"><path d="M8 .3 L15 4.3 L15 12.5 L8 16.6 L1 12.5 L1 4.3 Z" fill="#2b2b2b"></path><path d="M8 3.2 L12.4 5.8 L12.4 11 L8 13.6 L3.6 11 L3.6 5.8 Z" fill="#e8e8e8"></path><path d="M8 3.2 L8 8.4 L3.6 11 M8 8.4 L12.4 11" stroke="#2b2b2b" stroke-width="1.5" fill="none"></path></svg>
<div class="w" style="left: 1155px; top: 327px; letter-spacing: -0.09px;">Build Android</div>
<svg style="left:2289px;top:331px" width="11" height="11"><path d="M.5 .5 L10.5 10.5 M10.5 .5 L.5 10.5" stroke="#1a1a1a" stroke-width="1.1"></path></svg>
<svg style="left:1141px;top:373px" width="13" height="12"><path d="M12.5 6 H1 M6 .8 L.8 6 L6 11.2" fill="none" stroke="#b5b5b5" stroke-width="1.1"></path></svg>
<svg style="left:1175px;top:373px" width="13" height="12"><path d="M.5 6 H12 M7 .8 L12.2 6 L7 11.2" fill="none" stroke="#b5b5b5" stroke-width="1.1"></path></svg>
<svg style="left:1208px;top:376px" width="9" height="6"><path d="M.5 .8 L4.5 4.8 L8.5 .8" fill="none" stroke="#b5b5b5" stroke-width="1.1"></path></svg>
<svg style="left:1235px;top:372px" width="13" height="14"><path d="M6.5 13.5 V1 M1 6.4 L6.5 .9 L12 6.4" fill="none" stroke="#6a6a6a" stroke-width="1.1"></path></svg>
<div class="a" style="left:1263px;top:362px;width:821px;height:35px;background:#fff;border:1px solid #d9d9d9;border-bottom-color:#c4c4c4"></div>
<svg style="left:1271px;top:371px" width="18" height="16"><use href="#fold"></use></svg>
<svg style="left:1295px;top:375px" width="5" height="8"><path d="M.7 .7 L4 4 L.7 7.3" fill="none" stroke="#5a5a5a" stroke-width="1.1"></path></svg>
<div class="w" style="left: 1311px; top: 370px; letter-spacing: -0.16px;">此电脑</div>
<svg style="left:1357px;top:375px" width="5" height="8"><path d="M.7 .7 L4 4 L.7 7.3" fill="none" stroke="#5a5a5a" stroke-width="1.1"></path></svg>
<div class="a" style="left:1368px;top:363px;width:80px;height:33px;background:#f3f9ff;border:1px solid #6e7a86"></div>
<div class="a" style="left:1447px;top:363px;width:17px;height:33px;background:#f3f9ff;border:1px solid #6e7a86"></div>
<div class="w" style="left: 1372px; top: 370px; letter-spacing: -0.34px;">本地磁盘 (C:)</div>
<svg style="left:1453px;top:375px" width="5" height="8"><path d="M.7 .7 L4 4 L.7 7.3" fill="none" stroke="#2a2a2a" stroke-width="1.1"></path></svg>
<div class="w" style="left: 1468px; top: 370px; letter-spacing: 0.19px;">UnityProject</div>
<svg style="left:1547px;top:375px" width="5" height="8"><path d="M.7 .7 L4 4 L.7 7.3" fill="none" stroke="#5a5a5a" stroke-width="1.1"></path></svg>
<div class="w" style="left: 1562px; top: 370px; letter-spacing: -0.08px;">StudyCase</div>
<svg style="left:1632px;top:375px" width="5" height="8"><path d="M.7 .7 L4 4 L.7 7.3" fill="none" stroke="#5a5a5a" stroke-width="1.1"></path></svg>
<div class="w" style="left: 1647px; top: 370px; letter-spacing: 0.27px;">Build</div>
<svg style="left:1686px;top:375px" width="5" height="8"><path d="M.7 .7 L4 4 L.7 7.3" fill="none" stroke="#5a5a5a" stroke-width="1.1"></path></svg>
<svg style="left:2025px;top:376px" width="10" height="6"><path d="M.6 .7 L5 5 L9.4 .7" fill="none" stroke="#5a5a5a" stroke-width="1.1"></path></svg>
<svg style="left:2058px;top:372px" width="14" height="14" viewBox="0 0 14 14"><path d="M12.2 7 A5.4 5.4 0 1 1 9.6 2.4" fill="none" stroke="#5a5a5a" stroke-width="1.1"></path><path d="M8.2 .6 H12 V4.4" fill="none" stroke="#5a5a5a" stroke-width="1.1"></path></svg>
<div class="a" style="left:2096px;top:362px;width:202px;height:35px;background:#fff;border:1px solid #d9d9d9;border-bottom-color:#c4c4c4"></div>
<div class="w" style="left: 2106px; top: 370px; color: rgb(106, 106, 106); letter-spacing: 0.13px;">在 Build 中搜索</div>
<svg style="left:2271px;top:373px" width="13" height="13" viewBox="0 0 13 13"><circle cx="8" cy="5" r="3.6" fill="none" stroke="#5a5a5a" stroke-width="1.3"></circle><path d="M5.4 7.6 L.8 12.2" stroke="#5a5a5a" stroke-width="1.5"></path></svg>
<div class="w" style="left: 1144px; top: 414px; color: rgb(30, 58, 95); letter-spacing: -0.2px;">组织</div>
<svg style="left:1173px;top:421px" width="8" height="5"><path d="M0 0 H8 L4 4.5Z" fill="#1e3a5f"></path></svg>
<div class="w" style="left: 1211px; top: 414px; color: rgb(30, 58, 95); letter-spacing: -0.3px;">新建文件夹</div>
<svg style="left:2217px;top:418px" width="13" height="11"><path d="M0 .8 H13 M0 4 H13 M0 7.2 H13 M0 10.4 H13" stroke="#1a1a1a" stroke-width="1.1"></path></svg>
<svg style="left:2241px;top:421px" width="8" height="5"><path d="M0 0 H8 L4 4.5Z" fill="#1e3a5f"></path></svg>
<div class="a" style="left:2279px;top:415px;width:16px;height:16px;border-radius:8px;background:#0a78d6;color:#fff;font-size:11px;font-weight:bold;line-height:16px;text-align:center">?</div>
<svg style="left:1159px;top:447px" width="18" height="16"><use href="#fold"></use></svg>
<div class="w" style="left: 1181px; top: 446px; letter-spacing: 0.21px;">UnityBuild</div>
<svg style="left:1251px;top:451px" width="11" height="11"><use href="#pin"></use></svg>
<svg style="left:1159px;top:479px" width="18" height="16" opacity=".55"><use href="#fold"></use></svg>
<div class="w" style="left: 1181px; top: 478px; letter-spacing: 0.37px;">AppData</div>
<svg style="left:1251px;top:483px" width="11" height="11"><use href="#pin"></use></svg>
<svg style="left:1159px;top:511px" width="18" height="16"><use href="#fold"></use></svg>
<div class="w" style="left: 1181px; top: 510px; letter-spacing: 0.45px;">flingtrainer</div>
<svg style="left:1251px;top:515px" width="11" height="11"><use href="#pin"></use></svg>
<svg style="left:1159px;top:543px" width="18" height="16"><use href="#fold"></use></svg>
<div class="w" style="left: 1181px; top: 542px; letter-spacing: 0.16px;">screenshots</div>
<svg style="left:1251px;top:547px" width="11" height="11"><use href="#pin"></use></svg>
<svg style="left:1159px;top:575px" width="18" height="16"><use href="#fold"></use></svg>
<div class="w" style="left: 1181px; top: 574px; letter-spacing: 0.53px;">posts</div>
<svg style="left:1159px;top:607px" width="18" height="16"><use href="#fold"></use></svg>
<div class="w" style="left: 1181px; top: 606px; letter-spacing: -1px;">CE</div>
<svg style="left:1159px;top:639px" width="18" height="16"><use href="#fold"></use></svg>
<div class="w" style="left: 1181px; top: 638px; letter-spacing: 0.15px;">studycase4</div>
<svg style="left:1159px;top:671px" width="18" height="16"><use href="#fold"></use></svg>
<div class="w" style="left: 1181px; top: 670px; letter-spacing: 0.35px;">Build</div>
<div class="a" style="left:1136px;top:712px;width:121px;height:1px;background:#dcdcdc"></div>
<svg style="left:1138px;top:740px" width="10" height="6"><path d="M.8 .8 L5 5 L9.2 .8" fill="none" stroke="#2a2a2a" stroke-width="1.3"></path></svg>
<svg style="left:1159px;top:735px" width="17" height="16" viewBox="0 0 17 16"><rect x=".5" y=".8" width="16" height="11" rx="1.4" fill="#26a0da"></rect><rect x="1.6" y="1.9" width="13.8" height="8.8" rx=".6" fill="#39c1ea"></rect><path d="M7.4 11.8 H9.6 V14 H7.4Z" fill="#7a8a96"></path><path d="M4.6 14.2 H12.4 V15.2 H4.6Z" fill="#9aa8b2"></path></svg>
<div class="w" style="left: 1181px; top: 734px; letter-spacing: -0.26px;">此电脑</div>
<div class="a" style="left:1128px;top:760px;width:137px;height:32px;background:#d9d9d9;border:1px solid #b4b4b4"></div>
<svg style="left:1147px;top:771px" width="6" height="10"><path d="M.8 .8 L5 5 L.8 9.2" fill="none" stroke="#8a8a8a" stroke-width="1.2"></path></svg>
<svg style="left:1167px;top:767px" width="16" height="12" viewBox="0 0 16 12"><path d="M0 0 H3 V3 H0Z M3.6 0 H6.6 V3 H3.6Z M0 3.6 H3 V6.6 H0Z M3.6 3.6 H6.6 V6.6 H3.6Z" fill="#0a78d6"></path><path d="M2 8.6 H15.6 V11.4 H2Z" fill="#3a3a3a"></path><path d="M3 9.6 H6 V10.4 H3Z" fill="#3ed052"></path></svg>
<div class="w" style="left: 1189px; top: 766px; letter-spacing: -0.36px;">本地磁盘 (C:)</div>
<svg style="left:1140px;top:802px" width="6" height="10"><path d="M.8 .8 L5 5 L.8 9.2" fill="none" stroke="#8a8a8a" stroke-width="1.2"></path></svg>
<svg style="left:1159px;top:799px" width="18" height="17" viewBox="0 0 18 17"><rect x="3.5" y="3.4" width="14" height="9.6" rx="1.2" fill="#2192cf"></rect><rect x="4.6" y="4.5" width="11.8" height="7.4" rx=".5" fill="#3cc0ea"></rect><path d="M9.4 13 H11.6 V15 H9.4Z" fill="#7a8a96"></path><path d="M7 15.2 H14 V16.2 H7Z" fill="#9aa8b2"></path><circle cx="4.4" cy="4.4" r="4" fill="#3a9be0"></circle><path d="M1.4 3 Q4.4 1.6 7.4 3 M1 5.6 Q4.4 7 7.8 5.6 M4.4 .6 V8.2" stroke="#bfe4ff" stroke-width=".8" fill="none"></path></svg>
<div class="w" style="left: 1181px; top: 798px; letter-spacing: -0.41px;">网络</div>
<div class="a" style="left:1273px;top:648px;width:2px;height:209px;background:#8b8b8b;border-radius:1px"></div>
<div class="w" style="left: 1315px; top: 445px; color: rgb(76, 96, 122); letter-spacing: -0.01px;">名称</div>
<svg style="left:1429px;top:441px" width="8" height="5"><path d="M.5 4.4 L4 .8 L7.5 4.4" fill="none" stroke="#7a7a7a" stroke-width="1"></path></svg>
<div class="a" style="left:1557px;top:440px;width:1px;height:27px;background:#e5e5e5"></div>
<div class="a" style="left:1701px;top:440px;width:1px;height:27px;background:#e5e5e5"></div>
<div class="a" style="left:1821px;top:440px;width:1px;height:27px;background:#e5e5e5"></div>
<div class="a" style="left:1901px;top:440px;width:1px;height:27px;background:#e5e5e5"></div>
<div class="w" style="left: 1564px; top: 445px; color: rgb(76, 96, 122); letter-spacing: -0.47px;">修改日期</div>
<div class="w" style="left: 1708px; top: 445px; color: rgb(76, 96, 122); letter-spacing: -0.2px;">类型</div>
<div class="w" style="left: 1828px; top: 445px; color: rgb(76, 96, 122); letter-spacing: -0.01px;">大小</div>
<svg style="left:1303px;top:477px" width="18" height="16"><use href="#fold"></use></svg>
<div class="w" style="left: 1324px; top: 476px; letter-spacing: 0.07px;">StudyCase_BurstDebugInformation_D...</div>
<div class="w g" style="left: 1564px; top: 476px; letter-spacing: 0.41px;">2025/11/30 11:02</div>
<div class="w g" style="left: 1708px; top: 476px; letter-spacing: -0.26px;">文件夹</div>
<svg style="left:1304px;top:505px" width="16" height="16" viewBox="0 0 16 16"><rect x=".3" y=".3" width="15.4" height="15.4" rx="2.6" fill="#3b9af5"></rect><path d="M3.6 11.8 Q3.6 7 8 7 Q12.4 7 12.4 11.8Z" fill="#fff"></path><circle cx="6.2" cy="9.8" r=".7" fill="#3b9af5"></circle><circle cx="9.8" cy="9.8" r=".7" fill="#3b9af5"></circle><path d="M4.6 5.6 L5.6 7.4 M11.4 5.6 L10.4 7.4" stroke="#fff" stroke-width=".8"></path><path d="M4.4 4.6 L5.4 2.4 L6.4 4.6 M7.2 4.6 V2.4 H8.4 Q9 3.1 8.4 3.6 H7.2 M10 2.4 V4.6 M11.6 2.4 L10 3.6 L11.6 4.6" stroke="#cfe6ff" stroke-width=".6" fill="none"></path></svg>
<div class="w" style="left: 1324px; top: 504px; letter-spacing: 0.21px;">case4.apk</div>
<div class="w g" style="left: 1564px; top: 504px; letter-spacing: 0.41px;">2025/11/30 11:02</div>
<div class="w g" style="left: 1708px; top: 504px; letter-spacing: -0.3px;">APK 文件</div>
<div class="w g" style="left: 1836px; top: 504px; letter-spacing: 0px;">56,364 KB</div>
<div class="w" style="left: 1146px; top: 888px; width: 100px; text-align: right; letter-spacing: -0.07px;">文件名(N):</div>
<div class="a" style="left:1251px;top:885px;width:1054px;height:25px;background:#fff;border:1px solid #0067c0;border-radius:3px"></div>
<div class="a" style="left:1255px;top:888px;width:59px;height:18px;background:#0078d7"></div>
<div class="w" style="left: 1255px; top: 888px; color: rgb(255, 255, 255); letter-spacing: 0.19px;">case4.apk</div>
<svg style="left:2292px;top:895px" width="9" height="6"><path d="M.6 .7 L4.5 4.6 L8.4 .7" fill="none" stroke="#5a5a5a" stroke-width="1.1"></path></svg>
<div class="w" style="left: 1146px; top: 915px; width: 100px; text-align: right; letter-spacing: -0.42px;">保存类型(T):</div>
<div class="a" style="left:1251px;top:912px;width:1054px;height:25px;background:#fdfdfd;border:1px solid #d5d5d5;border-bottom-color:#bdbdbd;border-radius:3px"></div>
<div class="w" style="left: 1255px; top: 915px; letter-spacing: 0.32px;">apk (*.apk)</div>
<svg style="left:2292px;top:922px" width="9" height="6"><path d="M.6 .7 L4.5 4.6 L8.4 .7" fill="none" stroke="#5a5a5a" stroke-width="1.1"></path></svg>
<svg style="left:1139px;top:1002px" width="10" height="6"><path d="M.8 5.2 L5 1 L9.2 5.2" fill="none" stroke="#2a2a2a" stroke-width="1.3"></path></svg>
<div class="w" style="left: 1156px; top: 996px; letter-spacing: -0.43px;">隐藏文件夹</div>
<div class="a" style="left: 2106px; top: 991px; width: 86px; height: 24px; background: rgb(251, 251, 251); border: 1.5px solid rgb(0, 103, 192); border-radius: 4px; text-align: center; line-height: 23px; color: rgb(27, 27, 27); letter-spacing: -0.13px;">保存(S)</div>
<div class="a" style="left: 2206px; top: 991px; width: 86px; height: 24px; background: rgb(251, 251, 251); border-width: 1px; border-style: solid; border-color: rgb(208, 208, 208) rgb(208, 208, 208) rgb(186, 186, 186); border-image: initial; border-radius: 4px; text-align: center; line-height: 22px; color: rgb(27, 27, 27); letter-spacing: 0.8px;">取消</div>
<div class="a" style="left:2083px;top:969px;width:117px;height:60px;border:5px solid #86d7ff;border-radius:5px"></div>
<svg style="left:2298px;top:1022px" width="9" height="9"><path d="M7 1 H8.4 V2.4 H7Z M4 4 H5.4 V5.4 H4Z M7 4 H8.4 V5.4 H7Z M1 7 H2.4 V8.4 H1Z M4 7 H5.4 V8.4 H4Z M7 7 H8.4 V8.4 H7Z" fill="#b8b8b8"></path></svg>
<div class="a" style="left:1283px;top:440px;width:1px;height:433px;background:#ececec"></div>
<!-- 90_ime.html -->
<div class="a" style="left:2379px;top:926px;width:139px;height:24px;background:#000;border:1.5px solid #f2f2f2;border-radius:5px;box-shadow:-2px 4px 8px rgba(0,0,0,.55);overflow:hidden">
  <div class="a" style="left:25px;top:-4px;width:34px;height:34px;background:#1c1c1c;transform:rotate(45deg)"></div>
  <div class="a" style="left:78px;top:-2px;width:60px;height:26px;background:linear-gradient(100deg,#000 0,#0a1520 35%,#0c1a2a 100%)"></div>
</div>
<div class="a" style="left:2386px;top:929px;width:18px;height:20px;line-height:20px;font-size:15.5px;font-weight:bold;color:#fff;font-family:'Liberation Sans','Noto Sans CJK SC',sans-serif">英</div>
<div class="a" style="left:2448px;top:929px;width:18px;height:20px;line-height:20px;font-size:15.5px;font-weight:bold;color:#fff;font-family:'Liberation Sans','Noto Sans CJK SC',sans-serif">键</div>
<svg style="left:2404px;top:929px" width="20" height="18" viewBox="0 0 20 18"><path d="M11.4 1.2 Q17.6 5.6 15.6 11.6 Q13.2 17.2 5.2 16.2 Q2.6 15.6 2 14.4 Q9.4 16 12.2 10.6 Q14.2 6 11.4 1.2Z" fill="#fff"></path></svg>
<svg style="left:2426px;top:931px" width="14" height="14" viewBox="0 0 14 14"><circle cx="3.2" cy="3.6" r="1.4" fill="#fff"></circle><path d="M9.6 7.6 L11.4 8 L8.6 12.6 L7.8 12.2Z" fill="#fff"></path></svg>
<!-- anime face + flame -->
<svg style="left:2470px;top:870px" width="90" height="82" viewBox="0 0 90 82">
  <defs><linearGradient id="flm" x1="0" y1="1" x2="1" y2="0"><stop offset="0" stop-color="#10b4f0"></stop><stop offset=".45" stop-color="#1a84e0"></stop><stop offset="1" stop-color="#2f55c4"></stop></linearGradient></defs>
  <path d="M8 72 L18 66 L30 79 L10 79Z" fill="#f3d9c2"></path>
  <path d="M7 66 Q12 62 18 66 Q19 72 13 74 Q8 73 7 66Z" fill="#1c6fe0"></path>
  <path d="M10 67 Q13 65 16 67 Q16 71 13 72 Q10 71 10 67Z" fill="#59c6ff"></path>
  <circle cx="12" cy="67.4" r="1.1" fill="#fff"></circle>
  <path d="M3 58 L9 58 L34 79 L27 79Z" fill="#05090f"></path>
  <path d="M32 72 L42 72 L42 79 L34 79Z" fill="#f0cdb4"></path>
  <path d="M32 67 Q37 63 42 67 Q42 72 37 73 Q32 72 32 67Z" fill="#1e7fe6"></path>
  <path d="M34 68 Q37 66 40 68 Q40 71 37 71.6 Q34 71 34 68Z" fill="#7fd6ff"></path>
  <path d="M36 69 C33 62 30 60 28 59.5 C32 56 37 58 41 58 C37 54 38 50 45 46 C51 43 56 43 61 38.6 C56 36.6 54 35 55 33.4 C60 30 68 26 74.6 23.6 C79 20 81.6 14 83 9 C82 16 80 22 75.4 25.6 C70 29 65 31 63 34 C66 35.6 66 38 62.4 41.4 C57 45 51 46 46.6 49.6 C43 53 44 55 46 57 C50 56.4 56 55.6 60 54.6 C66 53 73 50 78 48 C73 51.4 66 55 60 56.6 C56 57.6 51 58 48 59 C45 62 42 66 40 70 Z" fill="url(#flm)"></path>
  <path d="M28 60 C30 50 35 42 39.6 35 C36 43 33 50 31.6 58 Z" fill="#128fd8"></path>
</svg>

</div>

</body></html>
